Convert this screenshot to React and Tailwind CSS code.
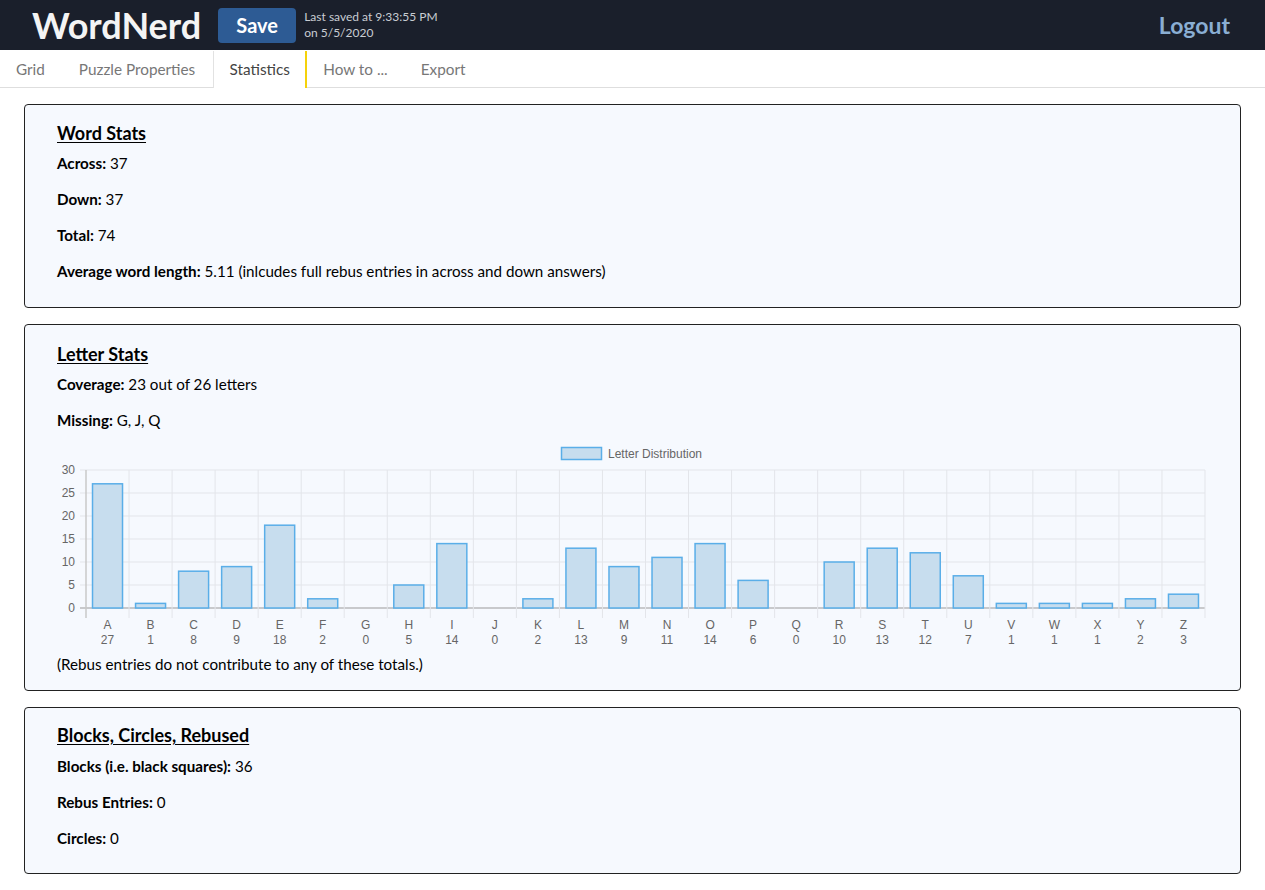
import React from 'react';

const font = { fontFamily: '"Source Sans Pro", Lato, "Open Sans", sans-serif' };

const letters = [
  ['A', 27], ['B', 1], ['C', 8], ['D', 9], ['E', 18], ['F', 2], ['G', 0], ['H', 5], ['I', 14],
  ['J', 0], ['K', 2], ['L', 13], ['M', 9], ['N', 11], ['O', 14], ['P', 6], ['Q', 0], ['R', 10],
  ['S', 13], ['T', 12], ['U', 7], ['V', 1], ['W', 1], ['X', 1], ['Y', 2], ['Z', 3],
];

// chart geometry (svg units = px)
const X0 = 29;
const X1 = 1148;
const YTOP = 30;
const YBASE = 168;
const CW = (X1 - X0) / letters.length;
const unit = (YBASE - YTOP) / 30;

const LetterChart = () => (
  <svg width="1152" height="212" viewBox="0 0 1152 212" className="block mt-[10px]" style={{ fontFamily: '"Liberation Sans", Arial, sans-serif' }}>
    {/* legend */}
    <rect x="504.5" y="7.5" width="40" height="12" fill="#c7ddee" stroke="#5aaee8" strokeWidth="1.5" />
    <text x="551" y="17.5" fontSize="12" fill="#666">Letter Distribution</text>

    {/* horizontal grid */}
    {[0, 5, 10, 15, 20, 25, 30].map((v) => {
      const y = YBASE - v * unit;
      return (
        <g key={v}>
          <line x1={X0 - 6} x2={X1} y1={y} y2={y} stroke={v === 0 ? '#999' : '#e3e5ea'} strokeWidth={v === 0 ? 1.2 : 1} />
          <text x={X0 - 11} y={y + 4} fontSize="12" fill="#666" textAnchor="end">{v}</text>
        </g>
      );
    })}

    {/* vertical grid */}
    {letters.map((_, i) => (
      <line key={i} x1={X0 + i * CW} x2={X0 + i * CW} y1={YTOP} y2={YBASE + 10} stroke={i === 0 ? '#c8c8c8' : '#e3e5ea'} strokeWidth={i === 0 ? 1.5 : 1} />
    ))}
    <line x1={X1} x2={X1} y1={YTOP} y2={YBASE + 10} stroke="#e3e5ea" />

    {/* bars */}
    {letters.map(([l, n], i) => {
      const cx = X0 + i * CW + CW / 2;
      const h = n * unit;
      return (
        <g key={l}>
          {n > 0 && (
            <rect x={cx - 15} y={YBASE - h} width="30" height={h} fill="#c7ddee" stroke="#5aaee8" strokeWidth="1.5" />
          )}
          <text x={cx} y={189} fontSize="12" fill="#666" textAnchor="middle">{l}</text>
          <text x={cx} y={204} fontSize="12" fill="#666" textAnchor="middle">{n}</text>
        </g>
      );
    })}
  </svg>
);

const Stat = ({ label, children, last }) => (
  <p className={`text-[15.2px] leading-[20px] text-black ${last ? '' : 'mb-[16px]'}`}>
    <span className="font-bold">{label}</span> {children}
  </p>
);

const Card = ({ title, children, className, headGap = 'mb-[8px]' }) => (
  <div className={`mx-[24px] border border-[#222] rounded-[4px] bg-[#f6f9fe] px-[32px] ${className}`}>
    <h2 className={`text-[18px] leading-[24px] font-bold underline underline-offset-2 text-black ${headGap}`}>{title}</h2>
    {children}
  </div>
);

const App = () => {
  return (
    <div className="min-h-screen bg-white" style={font}>
      {/* Header */}
      <div className="h-[50px] bg-[#1a1f2b] flex items-center pl-[32px] pr-[35px]">
        <h1 className="text-[36px] font-bold text-[#f4f4f4] leading-none">WordNerd</h1>
        <button className="ml-[17px] h-[35px] w-[78px] rounded-[4px] bg-[#2d5b94] text-white text-[20px] font-bold">Save</button>
        <div className="ml-[8px] text-[12px] leading-[16px] text-[#c9cdd3]">
          <div>Last saved at 9:33:55 PM</div>
          <div>on 5/5/2020</div>
        </div>
        <div className="ml-auto text-[23px] font-bold text-[#8aaed3]">Logout</div>
      </div>

      {/* Tabs */}
      <div className="h-[38px] flex border-b border-[#dedede] text-[15.3px] text-[#777] pt-[1px]">
        <div className="px-[16px] flex items-center">Grid</div>
        <div className="px-[18px] flex items-center">Puzzle Properties</div>
        <div className="flex items-center bg-white text-[#444] border-l border-[#e2e2e2] border-r-2 border-r-[#f5d20a] h-[37px] w-[94px] justify-center">Statistics</div>
        <div className="px-[16px] flex items-center">How to ...</div>
        <div className="px-[17px] flex items-center">Export</div>
      </div>

      <Card title="Word Stats" className="mt-[16px] pt-[16px] pb-[26px]">
        <Stat label="Across:">37</Stat>
        <Stat label="Down:">37</Stat>
        <Stat label="Total:">74</Stat>
        <Stat label="Average word length:" last>5.11 (inlcudes full rebus entries in across and down answers)</Stat>
      </Card>

      <Card title="Letter Stats" className="mt-[16px] pt-[17px] pb-[16px]">
        <Stat label="Coverage:">23 out of 26 letters</Stat>
        <Stat label="Missing:" last>G, J, Q</Stat>
        <LetterChart />
        <p className="text-[15.2px] leading-[20px] text-black mt-[2px]">(Rebus entries do not contribute to any of these totals.)</p>
      </Card>

      <Card title="Blocks, Circles, Rebused" headGap="mb-[9px]" className="mt-[16px] pt-[15px] pb-[25px]">
        <Stat label="Blocks (i.e. black squares):">36</Stat>
        <Stat label="Rebus Entries:">0</Stat>
        <Stat label="Circles:" last>0</Stat>
      </Card>
      <div className="h-[16px]" />
    </div>
  );
};

export default App;
